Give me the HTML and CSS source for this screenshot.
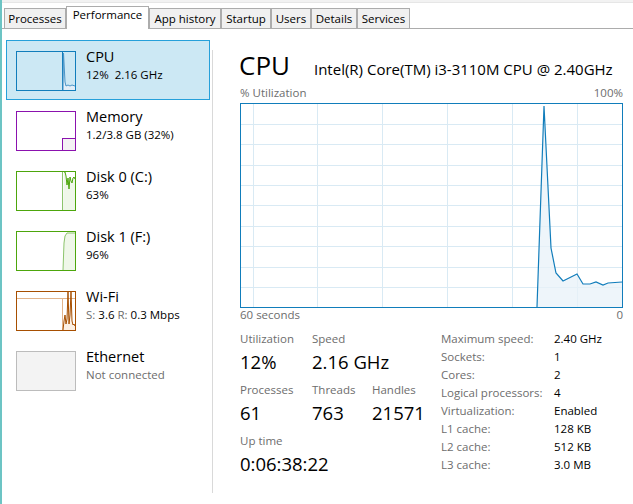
FILE: index.html
```html
<!DOCTYPE html>
<html>
<head>
<meta charset="utf-8">
<link rel="stylesheet" href="styles.css">
</head>
<body>
<div class="window">
  <div class="topstrip"></div>
  <div class="tabs">
    <div class="tab t-proc">Processes</div>
    <div class="tab active t-perf">Performance</div>
    <div class="tab t-app">App history</div>
    <div class="tab t-start">Startup</div>
    <div class="tab t-users">Users</div>
    <div class="tab t-det">Details</div>
    <div class="tab t-serv">Services</div>
  </div>
  <div class="main">
    <div class="sidebar">
      <div class="item selected">
        <svg class="thumb" width="60" height="40" viewBox="0 0 60 40">
          <polygon points="47,39 47.5,2 49,31 50,35 52,34 54,35 56,34 59,35 59,39" fill="#e3eef7"/>
          <line x1="46.5" y1="1" x2="46.5" y2="39" stroke="#117dbb" stroke-width="1"/>
          <polyline points="47,39 47.5,2 49,31 50,35 52,34 54,35 56,34 59,35" fill="none" stroke="#4a95c8" stroke-width="1"/>
          <rect x="0.5" y="0.5" width="59" height="39" fill="none" stroke="#117dbb"/>
        </svg>
        <div class="itext">
          <div class="ititle">CPU</div>
          <div class="isub">12%&nbsp; 2.16 GHz</div>
        </div>
      </div>
      <div class="item">
        <svg class="thumb" width="60" height="40" viewBox="0 0 60 40">
          <rect x="46.5" y="27.5" width="13" height="12" fill="#f4f2f4" stroke="#8b12ae"/>
          <rect x="0.5" y="0.5" width="59" height="39" fill="none" stroke="#8b12ae"/>
        </svg>
        <div class="itext">
          <div class="ititle">Memory</div>
          <div class="isub">1.2/3.8 GB (32%)</div>
        </div>
      </div>
      <div class="item">
        <svg class="thumb" width="60" height="40" viewBox="0 0 60 40">
          <polygon points="47,39 48,1 49,1 50,5 51,14 52,7 53,18 54,6 55,10 56,12 57,7 58,6 59,8 59,39" fill="#eff7e9"/>
          <line x1="46.5" y1="1" x2="46.5" y2="39" stroke="#8cc46c" stroke-width="1"/>
          <polyline points="48,1 49,1 50,5 51,14 52,7 53,18 54,6 55,10 56,12 57,7 58,6 59,8" fill="none" stroke="#4da60c" stroke-width="1"/>
          <rect x="0.5" y="0.5" width="59" height="39" fill="none" stroke="#4da60c"/>
        </svg>
        <div class="itext">
          <div class="ititle">Disk 0 (C:)</div>
          <div class="isub">63%</div>
        </div>
      </div>
      <div class="item">
        <svg class="thumb" width="60" height="40" viewBox="0 0 60 40">
          <polygon points="47,39 48,12 49,5 51,2 59,2 59,39" fill="#eff7e9"/>
          <polyline points="47,39 48,12 49,5 51,2 59,2" fill="none" stroke="#8cc46c" stroke-width="1"/>
          <rect x="0.5" y="0.5" width="59" height="39" fill="none" stroke="#4da60c"/>
        </svg>
        <div class="itext">
          <div class="ititle">Disk 1 (F:)</div>
          <div class="isub">96%</div>
        </div>
      </div>
      <div class="item">
        <svg class="thumb" width="60" height="40" viewBox="0 0 60 40">
          <polygon points="47,39 48,30 49,24 50,33 51,28 52,1 53,33 54,24 55,1 56,30 57,34 58,33 59,35 59,39" fill="#fcf0e4"/>
          <line x1="1" y1="7.5" x2="59" y2="7.5" stroke="#e2b48c" stroke-width="1"/>
          <line x1="46.5" y1="7" x2="46.5" y2="39" stroke="#e2b48c" stroke-width="1"/>
          <polyline points="47,39 48,30 49,24 50,33 51,28 52,1 53,33 54,24 55,1 56,30 57,34 58,33 59,35" fill="none" stroke="#a74f01" stroke-width="1"/>
          <rect x="0.5" y="0.5" width="59" height="39" fill="none" stroke="#a74f01"/>
        </svg>
        <div class="itext">
          <div class="ititle">Wi-Fi</div>
          <div class="isub"><span class="dim">S:</span> 3.6 <span class="dim">R:</span> 0.3 Mbps</div>
        </div>
      </div>
      <div class="item">
        <svg class="thumb" width="60" height="40" viewBox="0 0 60 40">
          <rect x="0.5" y="0.5" width="59" height="39" fill="#f3f3f3" stroke="#bcbcbc"/>
        </svg>
        <div class="itext">
          <div class="ititle">Ethernet</div>
          <div class="isub dim">Not connected</div>
        </div>
      </div>
    </div>
    <div class="divider"></div>
    <div class="detail">
      <div class="titlerow">
        <div class="bigtitle">CPU</div>
        <div class="cpuname">Intel(R) Core(TM) i3-3110M CPU @ 2.40GHz</div>
      </div>
      <div class="axisrow">
        <span>% Utilization</span>
        <span>100%</span>
      </div>
      <svg class="graph" width="383" height="205" viewBox="0 0 383 205">
        <g stroke="#d9eaf4" stroke-width="1">
          <line x1="13.5" y1="1" x2="13.5" y2="204"/>
          <line x1="77.5" y1="1" x2="77.5" y2="204"/>
          <line x1="142.5" y1="1" x2="142.5" y2="204"/>
          <line x1="207.5" y1="1" x2="207.5" y2="204"/>
          <line x1="272.5" y1="1" x2="272.5" y2="204"/>
          <line x1="337.5" y1="1" x2="337.5" y2="204"/>
          <line x1="1" y1="21.5" x2="382" y2="21.5"/>
          <line x1="1" y1="41.5" x2="382" y2="41.5"/>
          <line x1="1" y1="62.5" x2="382" y2="62.5"/>
          <line x1="1" y1="82.5" x2="382" y2="82.5"/>
          <line x1="1" y1="102.5" x2="382" y2="102.5"/>
          <line x1="1" y1="123.5" x2="382" y2="123.5"/>
          <line x1="1" y1="143.5" x2="382" y2="143.5"/>
          <line x1="1" y1="164.5" x2="382" y2="164.5"/>
          <line x1="1" y1="184.5" x2="382" y2="184.5"/>
        </g>
        <polygon points="297,204 304,3 311,145 316,170 323,178 337,171 343,181 350,181 356,179 363,182 368,180 382,179 382,204" fill="#e8f1f8" fill-opacity="0.75"/>
        <polyline points="297,204 304,3 311,145 316,170 323,178 337,171 343,181 350,181 356,179 363,182 368,180 382,179" fill="none" stroke="#117dbb" stroke-width="1.2"/>
        <rect x="0.5" y="0.5" width="382" height="204" fill="none" stroke="#117dbb"/>
      </svg>
      <div class="axisrow">
        <span>60 seconds</span>
        <span>0</span>
      </div>
      <div class="stats">
        <div class="statgrid">
          <div class="stat"><div class="slabel">Utilization</div><div class="svalue">12%</div></div>
          <div class="stat span2"><div class="slabel">Speed</div><div class="svalue">2.16 GHz</div></div>
          <div class="stat"><div class="slabel">Processes</div><div class="svalue">61</div></div>
          <div class="stat"><div class="slabel">Threads</div><div class="svalue">763</div></div>
          <div class="stat"><div class="slabel">Handles</div><div class="svalue">21571</div></div>
          <div class="stat span3"><div class="slabel">Up time</div><div class="svalue">0:06:38:22</div></div>
        </div>
        <div class="spec">
          <div class="k">Maximum speed:</div><div class="v">2.40 GHz</div>
          <div class="k">Sockets:</div><div class="v">1</div>
          <div class="k">Cores:</div><div class="v">2</div>
          <div class="k">Logical processors:</div><div class="v">4</div>
          <div class="k">Virtualization:</div><div class="v">Enabled</div>
          <div class="k">L1 cache:</div><div class="v">128 KB</div>
          <div class="k">L2 cache:</div><div class="v">512 KB</div>
          <div class="k">L3 cache:</div><div class="v">3.0 MB</div>
        </div>
      </div>
    </div>
  </div>
</div>
</body>
</html>
```

FILE: styles.css
```css
* { box-sizing: border-box; }
html, body {
  margin: 0;
  padding: 0;
  background: #ffffff;
}
body {
  font-family: "Open Sans", "Noto Sans", sans-serif;
  color: #000;
  width: 633px;
  height: 504px;
  overflow: hidden;
}
.window {
  border-left: 2px solid #6cc4c4;
  height: 504px;
  background: #fff;
}
.topstrip {
  height: 3px;
  background: #f2f2f2;
  border-bottom: 1px solid #e6e6e6;
}
.tabs {
  display: flex;
  align-items: flex-end;
  height: 26px;
  padding-left: 2px;
  border-bottom: 1px solid #acacac;
}
.tab {
  height: 20px;
  border: 1px solid #acacac;
  border-bottom: none;
  background: #f0f0f0;
  font-size: 11.5px;
  line-height: 19px;
  text-align: center;
  color: #000;
  white-space: nowrap;
}
.tab + .tab { margin-left: 0; }
.tab.active {
  height: 23px;
  margin-bottom: -1px;
  background: #fff;
  line-height: 16px;
  position: relative;
  z-index: 1;
}
.t-proc { width: 62px; }
.t-perf { width: 83px; }
.t-app { width: 72px; }
.t-start { width: 50px; }
.t-users { width: 40px; }
.t-det { width: 46px; }
.t-serv { width: 53px; }

.main {
  display: flex;
  align-items: flex-start;
}
.sidebar {
  width: 210px;
  padding: 11px 0 0 4px;
  flex: none;
}
.item {
  display: flex;
  align-items: flex-start;
  width: 204px;
  height: 60px;
  border: 1px solid transparent;
  padding: 6px 0 0 9px;
}
.item.selected {
  background: #cce8f4;
  border-color: #26a0da;
}
.thumb {
  display: block;
  flex: none;
  margin-top: 4px;
}
.itext {
  margin-left: 10px;
}
.ititle {
  font-size: 14.5px;
  line-height: 20px;
}
.isub {
  font-size: 11.5px;
  line-height: 15px;
}
.dim { color: #6d6d6d; }

.divider {
  flex: none;
  width: 1px;
  height: 443px;
  margin-top: 21px;
  background: #d9d9d9;
}
.detail {
  flex: 1;
  padding: 20px 10px 0 27px;
}
.titlerow {
  display: flex;
  align-items: baseline;
  height: 32px;
}
.bigtitle {
  font-size: 26px;
  line-height: 32px;
  margin-left: -1px;
}
.cpuname {
  font-size: 15px;
  margin-left: 24px;
}
.axisrow {
  display: flex;
  justify-content: space-between;
  font-size: 11.5px;
  line-height: 14px;
  color: #6d6d6d;
  width: 383px;
}
.titlerow + .axisrow { margin-top: 5px; }
.graph {
  display: block;
  margin-top: 3px;
}
.stats {
  display: flex;
  align-items: flex-start;
  margin-top: 10px;
}
.statgrid {
  display: grid;
  grid-template-columns: 72px 60px 69px;
  row-gap: 5px;
  width: 201px;
}
.span2 { grid-column: span 2; }
.span3 { grid-column: span 3; }
.slabel {
  font-size: 11.5px;
  line-height: 14px;
  color: #6d6d6d;
}
.svalue {
  font-size: 18.5px;
  line-height: 32px;
  white-space: nowrap;
}
.spec {
  display: grid;
  grid-template-columns: 113px auto;
  margin-top: -2px;
  font-size: 11.5px;
  line-height: 18px;
}
.spec .k { color: #6d6d6d; white-space: nowrap; }
.spec .v { color: #000; }
```
